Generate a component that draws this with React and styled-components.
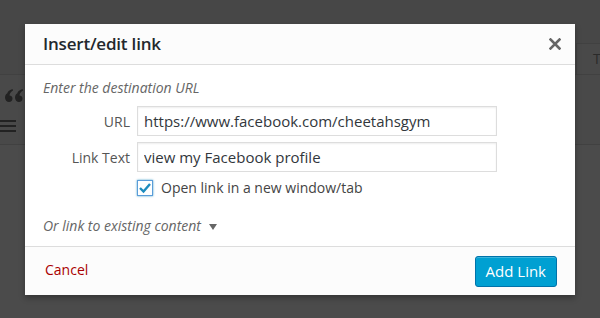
import React from "react";
import styled, { createGlobalStyle } from "styled-components";

const GlobalStyle = createGlobalStyle`
  html, body {
    margin: 0;
    padding: 0;
    background: #4a4a4a;
    font-family: "Open Sans", "Liberation Sans", sans-serif;
  }
`;

const Screen = styled.div`
  position: relative;
  width: 600px;
  height: 318px;
  overflow: hidden;
  background: #4b4b4b;
`;

/* dimmed editor behind the modal */
const TopBand = styled.div`
  height: 43px;
  background: #474747;
`;

const TabRow = styled.div`
  height: 31px;
  display: flex;
  justify-content: flex-end;
  background: #474747;
  border-bottom: 1px solid #414141;
`;

const Tab = styled.div`
  box-sizing: border-box;
  width: 24px;
  padding-left: 16px;
  border-left: 1px solid #414141;
  border-top: 1px solid #414141;
  color: #2a2a2a;
  font-size: 14px;
  line-height: 30px;
  background: #494949;
  overflow: hidden;
`;

const Toolbar = styled.div`
  height: 70px;
  background: #494949;
  border-bottom: 1px solid #414141;
  padding: 14px 0 0 5px;
  box-sizing: border-box;
`;

const QuoteIcon = styled.svg`
  display: block;
`;

const ListIcon = styled.svg`
  display: block;
  margin-top: 17px;
  margin-left: -5px;
`;

const Modal = styled.div`
  position: absolute;
  left: 25px;
  top: 24px;
  width: 550px;
  background: #fff;
  box-shadow: 0 3px 6px rgba(0, 0, 0, 0.3);
`;

const Header = styled.div`
  height: 40px;
  display: flex;
  align-items: center;
  justify-content: space-between;
  padding: 0 13px 0 18px;
  background: #fcfcfc;
  border-bottom: 1px solid #dddddd;
`;

const Title = styled.h1`
  margin: 0 0 2px;
  font-size: 17px;
  font-weight: 600;
  color: #23282d;
  letter-spacing: -0.2px;
`;

const Close = styled.button`
  border: 0;
  background: none;
  padding: 0;
  width: 14px;
  height: 14px;
  display: flex;
  align-items: center;
  justify-content: center;
`;

const Body = styled.div`
  padding: 13px 18px 10px;
`;

const Hint = styled.p`
  margin: 0 0 8px;
  font-size: 14px;
  line-height: 20px;
  font-style: italic;
  color: #666;
`;

const Fields = styled.div`
  display: grid;
  grid-template-columns: 87px 360px;
  column-gap: 7px;
  row-gap: 6px;
  align-items: center;
`;

const Label = styled.label`
  text-align: right;
  font-size: 14px;
  color: #555;
`;

const Input = styled.input`
  box-sizing: border-box;
  width: 100%;
  height: 30px;
  padding: 0 6px;
  border: 1px solid #ddd;
  box-shadow: inset 0 1px 2px rgba(0, 0, 0, 0.07);
  font-family: inherit;
  font-size: 15px;
  color: #32373c;
  outline: none;
`;

const CheckRow = styled.div`
  grid-column: 2;
  display: flex;
  align-items: center;
  gap: 8px;
  font-size: 14px;
  color: #444;
`;

const Box = styled.span`
  box-sizing: border-box;
  width: 16px;
  height: 16px;
  border: 1px solid #5b9dd9;
  box-shadow: 0 0 2px rgba(30, 140, 190, 0.8);
  display: flex;
  align-items: center;
  justify-content: center;
  background: #fff;
`;

const Existing = styled.div`
  margin-top: 19px;
  font-size: 14px;
  line-height: 20px;
  font-style: italic;
  color: #666;
  display: flex;
  align-items: center;
  gap: 8px;
`;

const Caret = styled.span`
  width: 0;
  height: 0;
  border-left: 4px solid transparent;
  border-right: 4px solid transparent;
  border-top: 6px solid #666;
  margin-top: 2px;
`;

const Footer = styled.div`
  height: 48px;
  display: flex;
  align-items: center;
  justify-content: space-between;
  padding: 0 18px 0 20px;
  background: #fcfcfc;
  border-top: 1px solid #dddddd;
`;

const CancelLink = styled.a`
  font-size: 14px;
  color: #a00;
  text-decoration: none;
  margin-top: -3px;
`;

const Primary = styled.button`
  height: 31px;
  padding: 0 10px;
  border: 1px solid #0073aa;
  border-radius: 3px;
  background: #00a0d2;
  box-shadow: inset 0 1px 0 rgba(120, 200, 230, 0.5);
  color: #fff;
  font-family: inherit;
  font-size: 15px;
`;

export default function App() {
  return (
    <>
      <GlobalStyle />
      <Screen>
        <TopBand />
        <TabRow>
          <Tab>T</Tab>
        </TabRow>
        <Toolbar>
          <QuoteIcon width="18" height="13" viewBox="0 0 18 13">
            <path d="M4 4 C1.5 4 0 6 0 8.5 C0 11 1.8 13 4 13 C6.2 13 7.5 11.5 7.5 9.5 C7.5 7.5 6 6.5 4.5 6.5 C4.5 4.5 6 2.5 8 1.5 L7.5 0 C4 1 2.5 3 2.3 4.5 Z" fill="#222" />
            <path d="M14 4 C11.5 4 10 6 10 8.5 C10 11 11.8 13 14 13 C16.2 13 17.5 11.5 17.5 9.5 C17.5 7.5 16 6.5 14.5 6.5 C14.5 4.5 16 2.5 18 1.5 L17.5 0 C14 1 12.5 3 12.3 4.5 Z" fill="#222" />
          </QuoteIcon>
          <ListIcon width="16" height="14" viewBox="0 0 16 14">
            <rect x="0" y="1" width="16" height="2" fill="#222" />
            <rect x="0" y="6" width="16" height="2" fill="#222" />
            <rect x="0" y="11" width="16" height="2" fill="#222" />
          </ListIcon>
        </Toolbar>

        <Modal>
          <Header>
            <Title>Insert/edit link</Title>
            <Close aria-label="Close">
              <svg width="12" height="12" viewBox="0 0 12 12">
                <path d="M1.5 1.5 L10.5 10.5 M10.5 1.5 L1.5 10.5" stroke="#666" strokeWidth="2.6" strokeLinecap="square" />
              </svg>
            </Close>
          </Header>
          <Body>
            <Hint>Enter the destination URL</Hint>
            <Fields>
              <Label>URL</Label>
              <Input defaultValue="https://www.facebook.com/cheetahsgym" />
              <Label>Link Text</Label>
              <Input defaultValue="view my Facebook profile" />
              <CheckRow>
                <Box>
                  <svg width="14" height="12" viewBox="0 0 14 12">
                    <path d="M2 6 L5.5 9.5 L12 2" fill="none" stroke="#1e8cbe" strokeWidth="2.4" />
                  </svg>
                </Box>
                Open link in a new window/tab
              </CheckRow>
            </Fields>
            <Existing>
              Or link to existing content <Caret />
            </Existing>
          </Body>
          <Footer>
            <CancelLink href="#">Cancel</CancelLink>
            <Primary>Add Link</Primary>
          </Footer>
        </Modal>
      </Screen>
    </>
  );
}
